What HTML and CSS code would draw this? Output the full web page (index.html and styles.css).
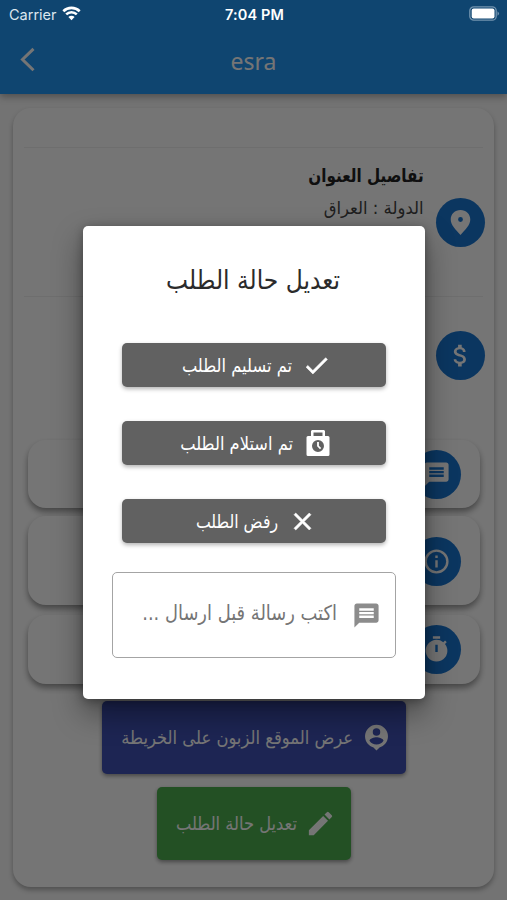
FILE: index.html
```html
<!DOCTYPE html>
<html lang="ar" dir="rtl">
<head>
<meta charset="utf-8">
<title>esra</title>
<link rel="stylesheet" href="styles.css">
</head>
<body>
<div class="screen">
  <header class="header">
    <div class="status" dir="ltr">
      <div class="carrier"><span>Carrier</span>
        <svg width="19" height="15" viewBox="0 0 19 15" fill="none" stroke="#fff" stroke-width="2.6"><path d="M1.3 5.2a11.8 11.8 0 0 1 16.4 0M4.2 8.4a7.6 7.6 0 0 1 10.6 0"/><path d="M9.5 14.2 6.4 11a4.4 4.4 0 0 1 6.2 0z" fill="#fff" stroke="none"/></svg>
      </div>
      <strong class="time">7:04 PM</strong>
      <svg class="battery" width="31" height="15" viewBox="0 0 31 15"><rect x=".8" y=".8" width="26.4" height="13.4" rx="4" fill="none" stroke="#7394af" stroke-width="1.3"/><rect x="2.7" y="2.6" width="22.8" height="9.8" rx="2" fill="#fff"/><path d="M28.5 5.2q3 2.3 0 4.6z" fill="#7394af"/></svg>
    </div>
    <nav class="nav" dir="ltr">
      <svg class="back" width="16" height="26" viewBox="0 0 16 26" fill="none" stroke="#fff" stroke-width="3"><path d="M13.5 1.8 2.5 12.5l11 10.8"/></svg>
      <h1 class="nav-title">esra</h1>
    </nav>
  </header>

  <main class="card">
    <section class="row address">
      <i class="circle"><svg class="icon" viewBox="0 0 24 24"><path fill-rule="evenodd" d="M12 1.700C7.400 1.700 3.900 5 3.900 9.500 3.900 14 8 18 12 22.300c4-4.300 8.100-8.300 8.100-12.800 0-4.500-3.500-7.800-8.100-7.800zm0 9.800a2 2 0 1 1 0-4 2 2 0 0 1 0 4z"/></svg></i>
      <div class="details">
        <h2 class="heading"><span>تفاصيل العنوان</span></h2>
        <p class="country"><span>الدولة : العراق</span></p>
      </div>
    </section>
    <section class="row price">
      <i class="circle"><svg class="icon" viewBox="0 0 24 24"><path d="M11.8 10.9c-2.27-.59-3-1.2-3-2.15 0-1.09 1.01-1.85 2.7-1.85 1.78 0 2.44.85 2.5 2.1h2.21c-.07-1.72-1.12-3.3-3.21-3.81V3h-3v2.16c-1.94.42-3.5 1.68-3.5 3.61 0 2.31 1.91 3.46 4.7 4.13 2.5.6 3 1.48 3 2.41 0 .69-.49 1.79-2.7 1.79-2.06 0-2.87-.92-2.98-2.1h-2.2c.12 2.19 1.76 3.42 3.68 3.83V21h3v-2.15c1.95-.37 3.5-1.5 3.5-3.55 0-2.84-2.43-3.81-4.7-4.4z"/></svg></i>
    </section>
    <section class="tile note">
      <i class="circle"><svg class="icon" viewBox="0 0 24 24"><path d="M20 2H4c-1.1 0-1.99.9-1.99 2L2 22l4-4h14c1.1 0 2-.9 2-2V4c0-1.1-.9-2-2-2zm-2 12H6v-2h12v2zm0-3H6V9h12v2zm0-3H6V6h12v2z"/></svg></i>
    </section>
    <section class="tile info">
      <i class="circle"><svg class="icon" viewBox="0 0 24 24"><path d="M11 17h2v-6h-2v6zm1-15a10 10 0 1 0 0 20 10 10 0 0 0 0-20zm0 18a8 8 0 1 1 0-16 8 8 0 0 1 0 16zM11 9h2V7h-2v2z"/></svg></i>
    </section>
    <section class="tile timer">
      <i class="circle"><svg class="icon" viewBox="0 0 24 24"><path d="M15 1H9v2h6V1zm-4 13h2V8h-2v6zm8.03-6.61 1.42-1.42c-.43-.51-.9-.99-1.41-1.41l-1.42 1.42A8.96 8.96 0 0 0 12 4a9 9 0 1 0 7.03 3.39z" fill-rule="evenodd"/></svg></i>
    </section>
    <button class="action map">
      <svg class="icon" viewBox="0 0 24 24"><path fill-rule="evenodd" d="M12 1.500A9.500 9.500 0 0 0 2.500 11c0 4.700 3.200 8.300 7 9.200L12 22.700l2.500-2.500c3.800-.9 7-4.500 7-9.200A9.500 9.500 0 0 0 12 1.500zm0 2.900a3.100 3.100 0 1 1 0 6.200 3.100 3.100 0 0 1 0-6.200zm0 13.400a6.900 6.900 0 0 1-5.800-3.100c.03-1.900 3.900-2.900 5.800-2.900s5.770 1 5.800 2.900a6.900 6.900 0 0 1-5.800 3.100z"/></svg>
      <span>عرض الموقع الزبون على الخريطة</span>
    </button>
    <button class="action edit">
      <svg class="icon" viewBox="0 0 24 24"><path d="M3 17.250V21h3.750L17.810 9.940l-3.750-3.750L3 17.250zM20.710 7.040a1 1 0 0 0 0-1.410l-2.340-2.340a1 1 0 0 0-1.410 0l-1.830 1.830 3.750 3.750 1.830-1.830z"/></svg>
      <span>تعديل حالة الطلب</span>
    </button>
  </main>

  <div class="scrim">
    <div class="dialog">
      <h2 class="dialog-title"><span>تعديل حالة الطلب</span></h2>
      <button class="choice delivered">
        <svg class="icon" viewBox="0 0 24 24"><path d="M9 16.170 4.830 12l-1.420 1.410L9 19 21 7l-1.410-1.410z" stroke="currentColor" stroke-width=".5"/></svg>
        <span>تم تسليم الطلب</span>
      </button>
      <button class="choice received">
        <svg class="icon lock" viewBox="0 0 24 28"><path fill-rule="evenodd" d="M6 1h12l1 1v5h3q1.500 0 1.500 1.500v17q0 1.500-1.500 1.500H2q-1.500 0-1.500-1.500v-17Q.5 7 2 7h3V2zM7.500 3.500V7h9V3.500zM12 11a6 6 0 1 0 0 12 6 6 0 0 0 0-12z"/><path d="M11.100 13h1.800v3.700l2.300 2.300-1.200 1.200-2.900-2.900z"/></svg>
        <span>تم استلام الطلب</span>
      </button>
      <button class="choice rejected">
        <svg class="icon" viewBox="0 0 24 24"><path d="M19 6.410 17.590 5 12 10.590 6.410 5 5 6.410 10.590 12 5 17.590 6.410 19 12 13.410 17.590 19 19 17.590 13.410 12z" stroke="currentColor" stroke-width=".5"/></svg>
        <span>رفض الطلب</span>
      </button>
      <div class="field">
        <svg class="icon" viewBox="0 0 24 24"><path d="M20 2H4c-1.100 0-1.990.9-1.990 2L2 22l4-4h14c1.100 0 2-.9 2-2V4c0-1.100-.9-2-2-2zm-2 12H6v-2h12v2zm0-3H6V9h12v2zm0-3H6V6h12v2z"/></svg>
        <span>اكتب رسالة قبل ارسال ...</span>
      </div>
    </div>
  </div>
</div>
</body>
</html>
```
FILE: styles.css
```css
* { box-sizing: border-box; }
body { margin: 0; font-family: "DejaVu Sans", sans-serif; }
h1, h2, p { margin: 0; font-weight: 400; }
button { border: 0; font: inherit; color: #fff; }
span { white-space: nowrap; }
.screen { position: relative; width: 507px; height: 900px; overflow: hidden; background: #fafafa; display: flex; flex-direction: column; }
.header { height: 94px; flex: none; background: #2196f3; box-shadow: 0 3px 7px rgba(0,0,0,.3); }
.status { position: relative; z-index: 3; height: 28px; display: grid; grid-template-columns: 1fr auto 1fr; align-items: center; padding: 0 7px 0 9px; color: #fff; font-family: Inter, sans-serif; font-size: 15px; }
.carrier { display: flex; align-items: center; gap: 5px; color: #dce7ef; font-size: 14.5px; }
.carrier svg { margin-top: -2px; }
.time { font-weight: 600; font-size: 14.5px; letter-spacing: .1px; }
.battery { justify-self: end; margin-top: -2px; }
.nav { height: 66px; display: grid; grid-template-columns: 60px 1fr 60px; align-items: center; color: #fff; }
.back { margin: -3px 0 0 20px; }
.nav-title { text-align: center; font: 400 23px "Noto Sans", sans-serif; margin-top: -1px; }
.card { width: 481px; height: 779px; margin: 14px 13px 0; flex: none; border-radius: 18px; background: #fff; box-shadow: 0 3px 5px rgba(0,0,0,.3); display: flex; flex-direction: column; align-items: center; padding-top: 39px; }
.row { width: 459px; flex: none; border-top: 1px solid #efefef; display: flex; }
.circle { width: 49px; height: 49px; flex: none; border-radius: 50%; background: #1976d2; display: grid; place-items: center; }
.row .circle { margin-right: -2px; }
.icon { width: 29px; height: 29px; fill: currentColor; flex: none; display: block; }
.circle .icon { color: #fff; }
.address { height: 149px; }
.address .circle { margin-top: 50px; }
.details { padding: 14px 12px 0 0; color: #222; }
.details span, .dialog span, .action span { display: block; transform-origin: right center; }
.heading { font-size: 18.5px; font-weight: 700; line-height: 28px; }
.heading span { transform: scaleX(.82); }
.country { font-size: 17.5px; line-height: 36px; color: #444; }
.country span { transform: scaleX(.94); }
.price { height: 144px; padding-top: 34px; }
.tile { width: 452px; flex: none; border-radius: 18px; background: #fff; box-shadow: 0 4px 6px rgba(0,0,0,.4); display: flex; align-items: center; padding-right: 19px; }
.note { height: 68px; }
.info { height: 89px; margin-top: 8px; padding-top: 2px; }
.timer { height: 69px; margin-top: 10px; }
.action { height: 73px; flex: none; padding: 0; border-radius: 5px; display: flex; align-items: center; justify-content: center; font-size: 18.5px; box-shadow: 0 2px 4px rgba(0,0,0,.4); }
.map { width: 304px; margin-top: 17px; padding-left: 5px; gap: 9px; background: #3f51b5; }
.map span { width: 231px; transform: scaleX(.885); }
.edit { width: 194px; margin-top: 13px; padding-left: 4px; gap: 8px; background: #4caf50; }
.edit .icon { width: 31px; height: 31px; }
.edit span { width: 121px; transform: scaleX(.88); }
.scrim { position: absolute; z-index: 2; inset: 0; background: rgba(0,0,0,.54); display: flex; align-items: flex-start; justify-content: center; }
.dialog { width: 342px; height: 473px; margin-top: 226px; border-radius: 5px; background: #fff; box-shadow: 0 14px 30px rgba(0,0,0,.4), 0 2px 10px rgba(0,0,0,.3); display: flex; flex-direction: column; align-items: center; padding-top: 31px; }
.dialog-title { font-size: 26px; line-height: 46px; height: 86px; color: #2b2b2b; }
.dialog-title span { width: 173px; transform: scaleX(.9); }
.choice { width: 264px; height: 44px; flex: none; margin-bottom: 34px; padding: 0 0 0 5px; border-radius: 5px; background: #616161; box-shadow: 0 2px 4px rgba(0,0,0,.3); display: flex; align-items: center; justify-content: center; gap: 10px; font-size: 18.5px; }
.delivered span { width: 110px; transform: scaleX(.88); }
.received { padding-left: 3px; gap: 13px; }
.received span { width: 112px; transform: scaleX(.88); }
.rejected span { width: 82px; transform: scaleX(.85); }
.lock { width: 24px; height: 28px; }
.field { width: 284px; height: 86px; flex: none; margin-top: -5px; border: 1px solid #a4a4a4; border-radius: 5px; display: flex; align-items: center; padding-right: 14px; gap: 15px; color: #757575; font-size: 20.5px; }
.field .icon { color: #8c8c8c; }
.field span { width: 195px; padding-bottom: 5px; transform: scaleX(.872); }
```
